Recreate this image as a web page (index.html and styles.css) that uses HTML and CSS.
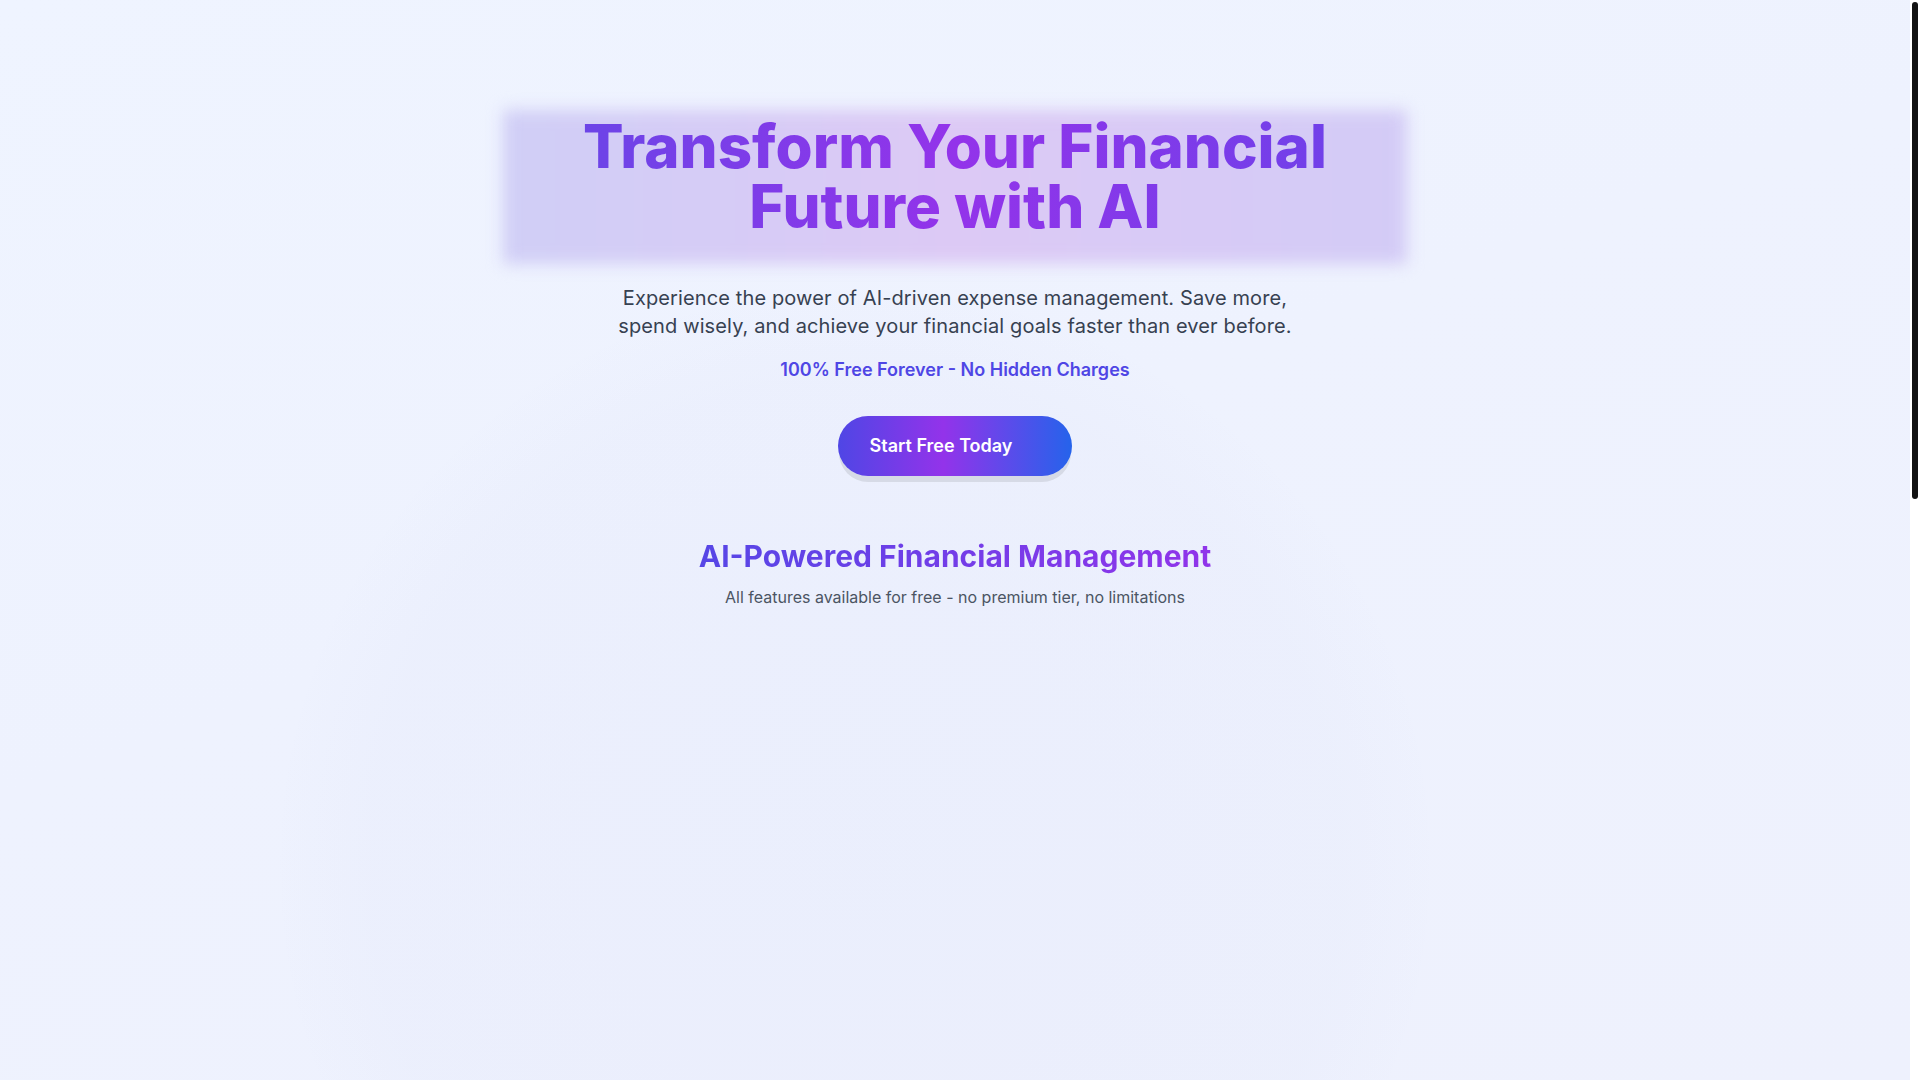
FILE: index.html
```html
<!DOCTYPE html>
<html lang="en">
<head>
<meta charset="utf-8">
<title>AI Finance</title>
<link rel="stylesheet" href="styles.css">
</head>
<body>
<div class="viewport">
  <div class="bg-circle"></div>
  <main class="page">
    <section class="hero">
      <div class="title-wrap">
        <div class="title-glow"></div>
        <h1 class="title"><span class="grad-text">Transform Your Financial<br>Future with AI</span></h1>
      </div>
      <p class="lead">Experience the power of AI-driven expense management. Save more, spend wisely, and achieve your financial goals faster than ever before.</p>
      <p class="free">100% Free Forever - No Hidden Charges</p>
      <a class="cta" href="#">
        <span class="cta-label">Start Free Today</span>
        <span class="cta-icon"></span>
      </a>
    </section>
    <section class="features">
      <h2 class="features-title">AI-Powered Financial Management</h2>
      <p class="features-sub">All features available for free - no premium tier, no limitations</p>
      <div class="features-grid"></div>
    </section>
  </main>
</div>
<div class="scrollbar"><div class="scrollbar-thumb"></div></div>
</body>
</html>
```

FILE: styles.css
```css
html, body {
  margin: 0;
  height: 100%;
  overflow: hidden;
  background: #ffffff;
}
body {
  font-family: Inter, "Noto Sans", Arial, sans-serif;
  display: flex;
}
.viewport {
  position: relative;
  flex: 1;
  height: 100%;
  overflow: hidden;
  background: linear-gradient(160deg, #eff4ff 0%, #eef2fe 45%, #eef1fd 100%);
}
.scrollbar {
  width: 10px;
  height: 100%;
  background: #ffffff;
  display: flex;
  justify-content: center;
}
.scrollbar-thumb {
  width: 6px;
  height: 497px;
  margin-top: 2px;
  border-radius: 3px;
  background: #121212;
}
.bg-circle {
  position: absolute;
  left: 280px;
  top: 290px;
  width: 1150px;
  height: 1150px;
  border-radius: 50%;
  background: radial-gradient(circle, rgba(228, 232, 250, 0.35) 0%, rgba(228, 232, 250, 0.25) 60%, rgba(228, 232, 250, 0) 72%);
  pointer-events: none;
}
.page {
  position: relative;
  display: flex;
  flex-direction: column;
  align-items: center;
}
.hero {
  display: flex;
  flex-direction: column;
  align-items: center;
  padding-top: 116px;
}
.title-wrap {
  position: relative;
  width: 904px;
  display: flex;
  justify-content: center;
}
.title-glow {
  position: absolute;
  top: -6px;
  bottom: -28px;
  left: 0;
  right: 0;
  background: linear-gradient(90deg, #d0cef6 0%, #dcc9f5 50%, #d3cbf6 100%);
  filter: blur(8px);
}
.title {
  position: relative;
  margin: 0;
  font-size: 60px;
  line-height: 1;
  font-weight: 800;
  letter-spacing: 0;
  text-align: center;
}
.grad-text {
  display: inline-block;
  background: linear-gradient(90deg, #6c44e7 0%, #9333ea 50%, #7140e9 100%);
  -webkit-background-clip: text;
  background-clip: text;
  color: transparent;
}
.lead {
  margin: 48px 0 0;
  max-width: 680px;
  font-size: 20px;
  line-height: 28px;
  letter-spacing: 0.12px;
  color: #374151;
  text-align: center;
}
.free {
  margin: 16px 0 0;
  font-size: 18px;
  line-height: 28px;
  font-weight: 600;
  color: #4f46e5;
}
.cta {
  margin-top: 32px;
  display: flex;
  align-items: center;
  gap: 8px;
  padding: 16px 32px;
  border-radius: 9999px;
  background: linear-gradient(90deg, #4f46e5 0%, #9333ea 45%, #2563eb 100%);
  color: #ffffff;
  font-size: 18px;
  line-height: 28px;
  font-weight: 600;
  text-decoration: none;
  box-shadow: 0 7px 0 -1px #d6dae6;
}
.cta-icon {
  width: 20px;
  height: 20px;
  opacity: 0;
}
.features {
  display: flex;
  flex-direction: column;
  align-items: center;
  margin-top: 62px;
}
.features-title {
  margin: 0;
  font-size: 30px;
  line-height: 36px;
  font-weight: 700;
  background: linear-gradient(90deg, #5646e6 0%, #9034ea 100%);
  -webkit-background-clip: text;
  background-clip: text;
  color: transparent;
}
.features-sub {
  margin: 11px 0 0;
  font-size: 16px;
  line-height: 24px;
  color: #4b5563;
}
```
